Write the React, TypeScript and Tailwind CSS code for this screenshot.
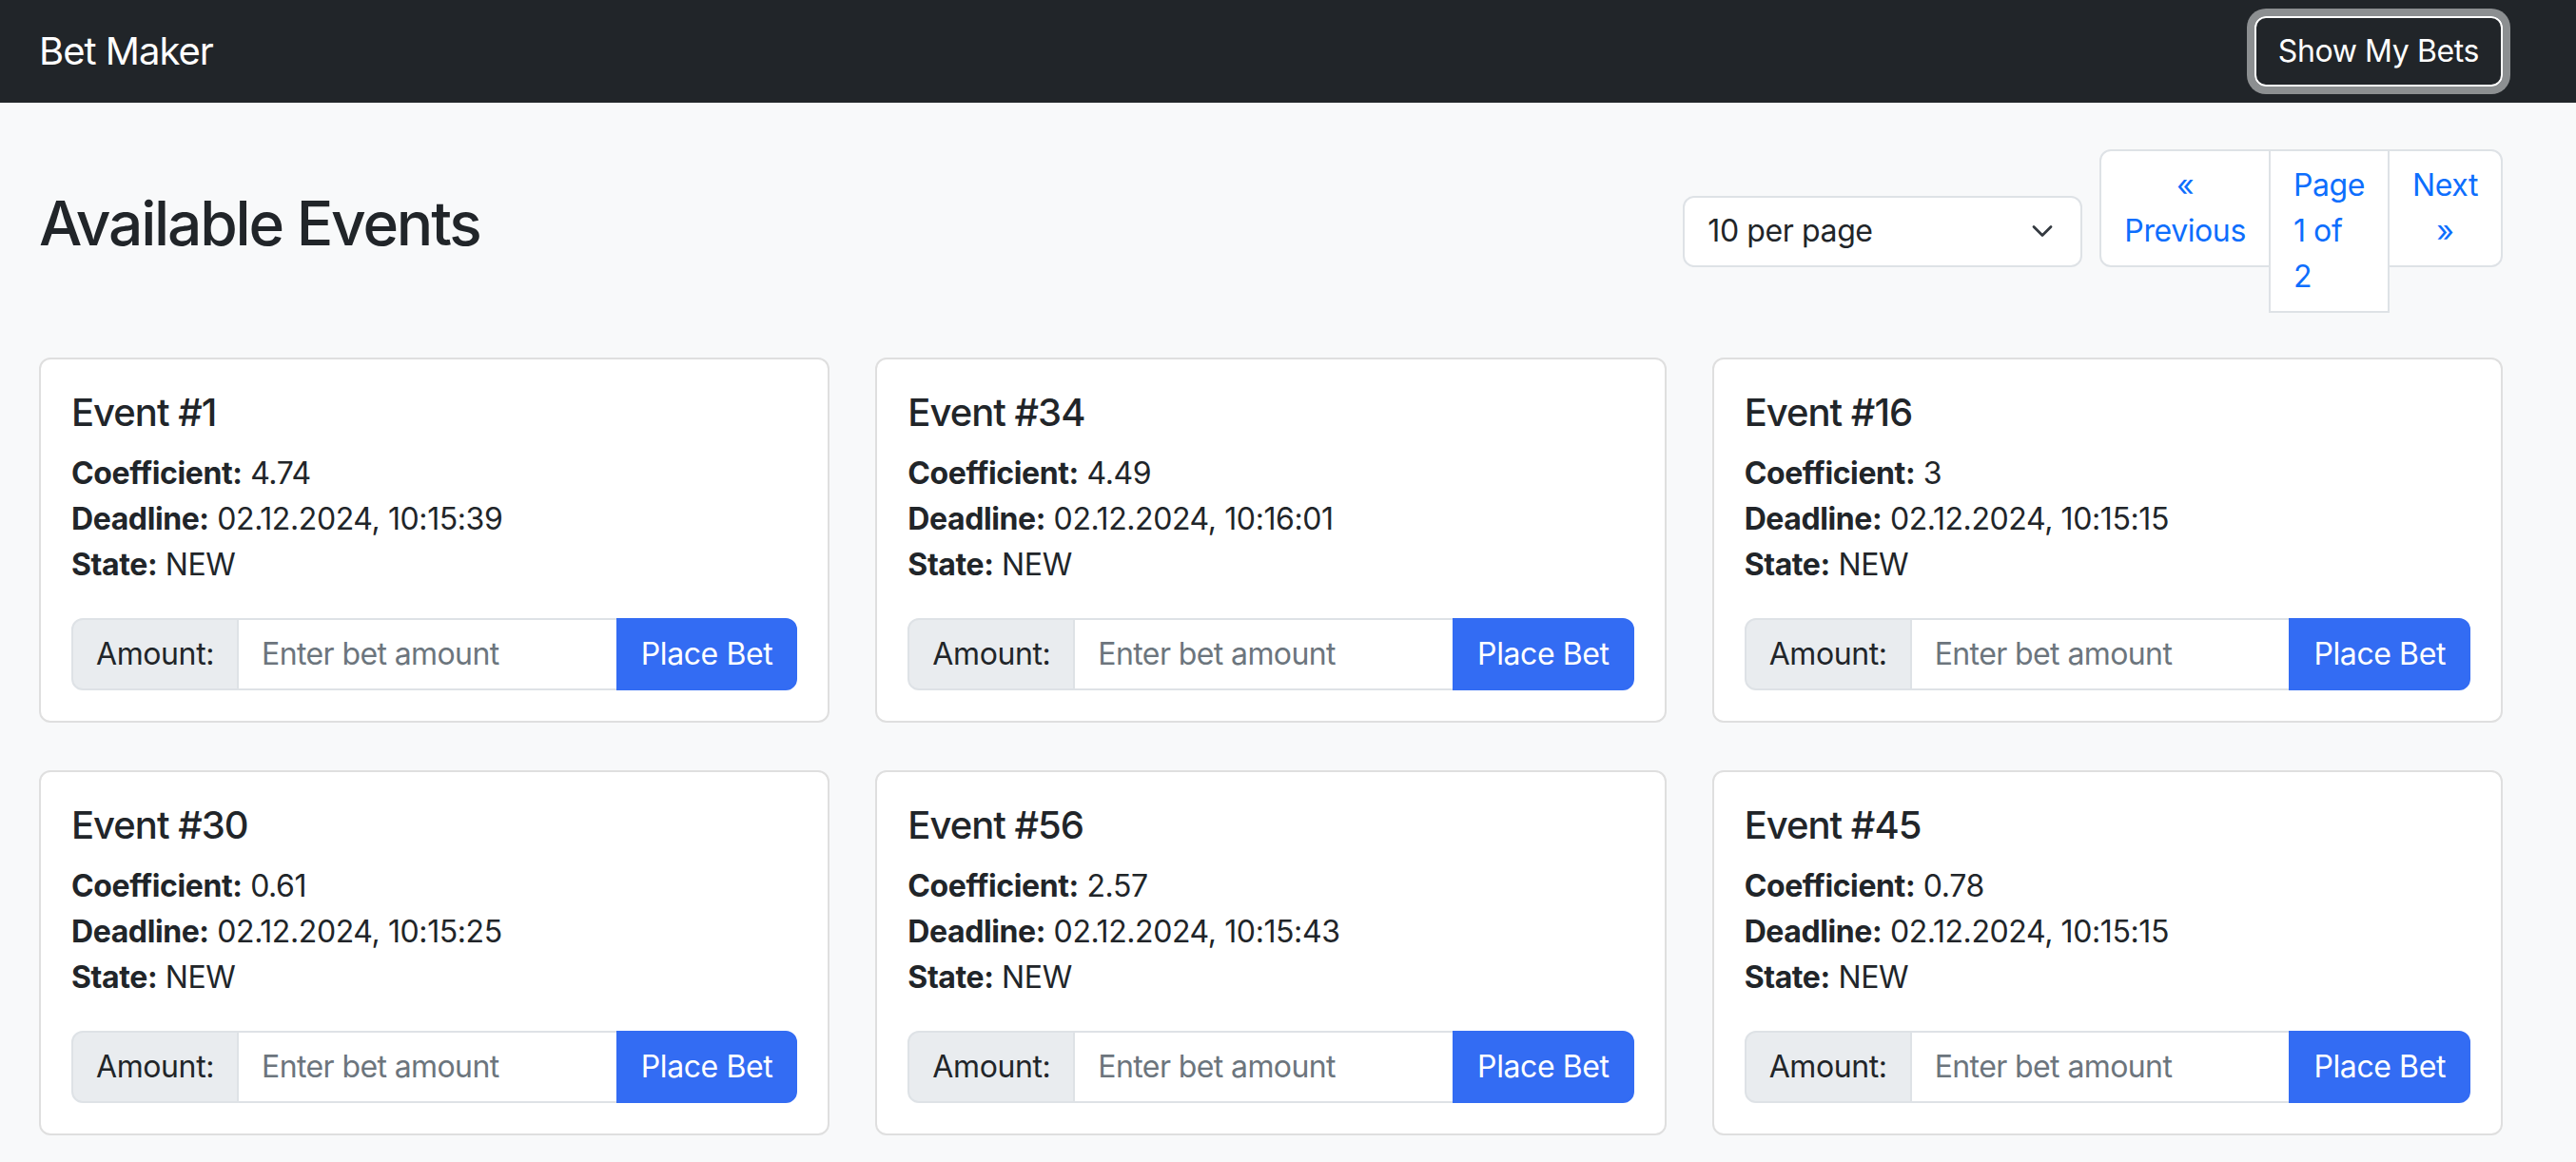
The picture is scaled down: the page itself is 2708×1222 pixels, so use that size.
import React from 'react'

const EVENTS = [
  { id: 1, coefficient: '4.74', deadline: '02.12.2024, 10:15:39', state: 'NEW' },
  { id: 34, coefficient: '4.49', deadline: '02.12.2024, 10:16:01', state: 'NEW' },
  { id: 16, coefficient: '3', deadline: '02.12.2024, 10:15:15', state: 'NEW' },
  { id: 30, coefficient: '0.61', deadline: '02.12.2024, 10:15:25', state: 'NEW' },
  { id: 56, coefficient: '2.57', deadline: '02.12.2024, 10:15:43', state: 'NEW' },
  { id: 45, coefficient: '0.78', deadline: '02.12.2024, 10:15:15', state: 'NEW' },
]

function EventCard({ event }: { event: (typeof EVENTS)[number] }) {
  return (
    <div className="bg-white border-2 border-[#dfdfdf] rounded-[12px] p-[32px]">
      <h5 className="text-[40px] leading-[48px] font-medium tracking-[-1px] mb-[16px]">Event #{event.id}</h5>
      <div className="text-[32px] leading-[48px] mb-[32px]">
        <div>
          <span className="font-bold">Coefficient:</span> {event.coefficient}
        </div>
        <div>
          <span className="font-bold">Deadline:</span> {event.deadline}
        </div>
        <div>
          <span className="font-bold">State:</span> {event.state}
        </div>
      </div>
      <div className="flex text-[32px] leading-[48px]">
        <span className="px-[24px] py-[12px] bg-[#e9ecef] border-2 border-[#dee2e6] rounded-l-[12px] whitespace-nowrap">
          Amount:
        </span>
        <input
          type="number"
          placeholder="Enter bet amount"
          className="flex-1 min-w-0 -ml-[2px] px-[24px] py-[12px] bg-white border-2 border-[#dee2e6] tracking-[-0.6px] placeholder:text-[#6c757d] outline-none"
        />
        <button
          type="button"
          className="-ml-[2px] px-[24px] py-[12px] bg-[#336cf3] border-2 border-[#336cf3] text-white rounded-r-[12px] whitespace-nowrap"
        >
          Place Bet
        </button>
      </div>
    </div>
  )
}

export default function App() {
  return (
    <div className="min-h-screen bg-[#f8f9fa] text-[#212529] tracking-[-0.4px] font-['Inter',sans-serif]">
      <nav className="h-[108px] bg-[#212529] flex items-center justify-between pl-[41px] pr-[77px]">
        <span className="text-white text-[40px] leading-[60px] tracking-[-1px]">Bet Maker</span>
        <button
          type="button"
          className="text-white text-[32px] leading-[48px] px-[23px] py-[11px] border-2 border-white rounded-[12px] shadow-[0_0_0_8px_rgba(248,249,250,0.5)]"
        >
          Show My Bets
        </button>
      </nav>

      <main className="pl-[41px] pr-[77px] pt-[49px] pb-[40px]">
        <div className="flex items-center justify-between mb-[47px]">
          <h2 className="text-[64px] leading-[1.2] font-medium tracking-[-2.2px] mb-[16px]">Available Events</h2>
          <div className="flex items-center gap-[18px]">
            <div className="relative w-[420px] h-[75px] bg-white border-2 border-[#dee2e6] rounded-[12px] flex items-center pl-[24px] text-[32px]">
              10 per page
              <svg
                className="absolute right-[29px] top-1/2 -translate-y-1/2"
                width="22"
                height="13"
                viewBox="0 0 22 13"
                fill="none"
                stroke="#343a40"
                strokeWidth="2.8"
                strokeLinecap="round"
                strokeLinejoin="round"
              >
                <path d="M2 2l9 9 9-9" />
              </svg>
            </div>
            <ul className="flex items-start text-[32px] leading-[48px] text-[#0d6efd]">
              <li className="bg-white border-2 border-[#dee2e6] rounded-l-[12px] px-[24px] py-[12px] text-center">
                <div>«</div>
                <div>Previous</div>
              </li>
              <li className="-ml-[2px] bg-white border-2 border-[#dee2e6] px-[24px] py-[12px]">
                <div>Page</div>
                <div>1 of</div>
                <div>2</div>
              </li>
              <li className="-ml-[2px] bg-white border-2 border-[#dee2e6] rounded-r-[12px] px-[24px] py-[12px] text-center">
                <div>Next</div>
                <div>»</div>
              </li>
            </ul>
          </div>
        </div>

        <div className="grid grid-cols-3 gap-x-[48px] gap-y-[50px]">
          {EVENTS.map((ev) => (
            <EventCard key={ev.id} event={ev} />
          ))}
        </div>
      </main>
    </div>
  )
}
